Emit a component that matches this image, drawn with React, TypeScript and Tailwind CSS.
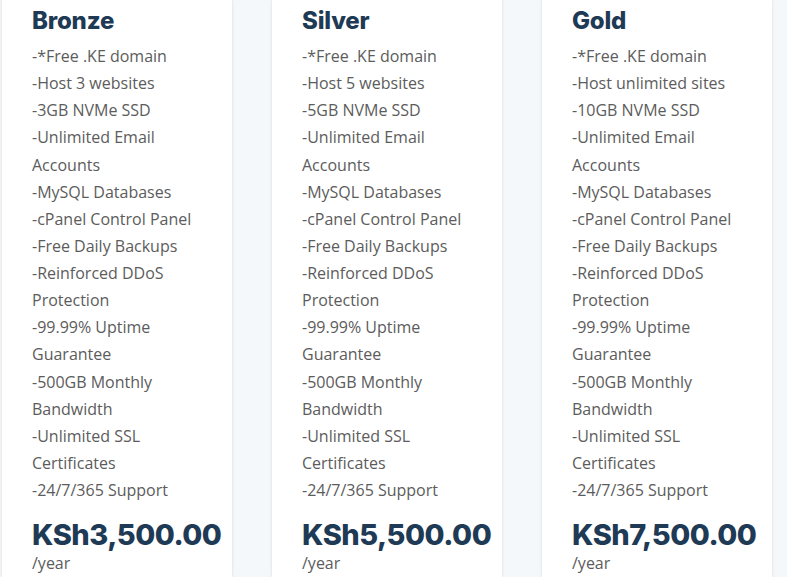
import React from 'react';

const features = (sites: string, ssd: string) => [
  '-*Free .KE domain',
  sites,
  ssd,
  '-Unlimited Email Accounts',
  '-MySQL Databases',
  '-cPanel Control Panel',
  '-Free Daily Backups',
  '-Reinforced DDoS Protection',
  '-99.99% Uptime Guarantee',
  '-500GB Monthly Bandwidth',
  '-Unlimited SSL Certificates',
  '-24/7/365 Support',
];

const plans = [
  { name: 'Bronze', items: features('-Host 3 websites', '-3GB NVMe SSD'), price: 'KSh3,500.00' },
  { name: 'Silver', items: features('-Host 5 websites', '-5GB NVMe SSD'), price: 'KSh5,500.00' },
  { name: 'Gold', items: features('-Host unlimited sites', '-10GB NVMe SSD'), price: 'KSh7,500.00' },
];

export default function App() {
  return (
    <div className="w-[787px] h-[577px] overflow-hidden bg-[#f4f8fb] flex gap-[40px] pl-[2px]">
      {plans.map((plan) => (
        <div
          key={plan.name}
          className="w-[230px] shrink-0 bg-white shadow-[0_0_3px_rgba(0,0,0,0.12)] pl-[30px] pr-[26px] pt-[5px]"
        >
          <h3 className="text-[24px] leading-[32px] font-extrabold text-[#1e3a55] font-['Inter',sans-serif] tracking-[-0.2px]">
            {plan.name}
          </h3>
          <ul className="mt-[6px] font-['Open_Sans',sans-serif] text-[16px] leading-[27.125px] text-[#5c5c5c]">
            {plan.items.map((it) => (
              <li key={it}>{it}</li>
            ))}
          </ul>
          <div className="mt-[13px] text-[29px] leading-[36px] font-extrabold text-[#1e3a55] font-['Inter',sans-serif] tracking-[-0.5px]">
            {plan.price}
          </div>
          <div className="font-['Open_Sans',sans-serif] text-[16px] leading-[22px] text-[#5c5c5c] -mt-[1px]">/year</div>
        </div>
      ))}
    </div>
  );
}
